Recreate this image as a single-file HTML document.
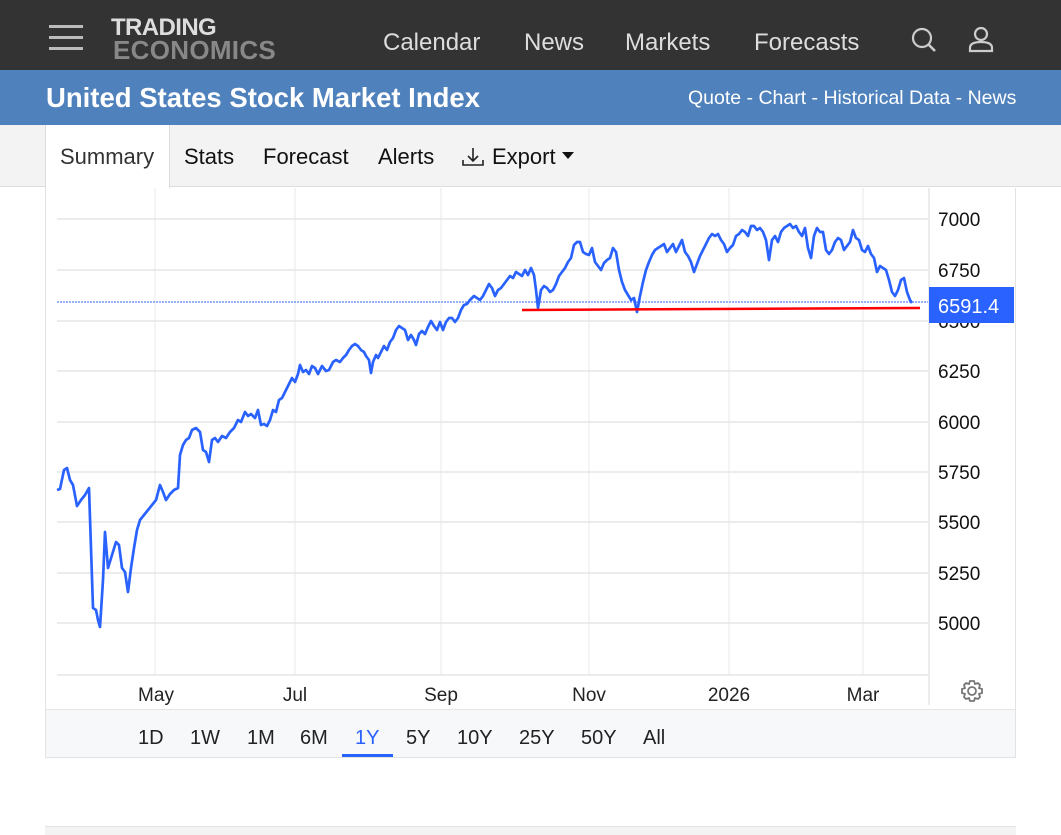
<!DOCTYPE html>
<html><head><meta charset="utf-8"><style>
*{margin:0;padding:0;box-sizing:border-box}
body{width:1061px;height:835px;overflow:hidden;background:#fff;font-family:"Liberation Sans",Arial,sans-serif;position:relative}
.a{position:absolute;white-space:nowrap}
</style></head><body>
<div class="a" style="left:0;top:0;width:1061px;height:70px;background:#333"></div>
<div class="a" style="left:49px;top:25px;width:34px;height:3px;background:#bbb"></div>
<div class="a" style="left:49px;top:36px;width:34px;height:3px;background:#bbb"></div>
<div class="a" style="left:49px;top:47px;width:34px;height:3px;background:#bbb"></div>
<div class="a" style="left:111px;top:17px;font-weight:bold;font-size:24px;line-height:22px;color:#ddd;letter-spacing:-0.6px">TRADING</div>
<div class="a" style="left:113px;top:38px;font-weight:bold;font-size:26px;line-height:24px;color:#888;letter-spacing:0.3px">ECONOMICS</div>
<div class="a" style="left:383px;top:29px;font-size:24px;color:#ddd">Calendar</div>
<div class="a" style="left:524px;top:29px;font-size:24px;color:#ddd">News</div>
<div class="a" style="left:625px;top:29px;font-size:24px;color:#ddd">Markets</div>
<div class="a" style="left:754px;top:29px;font-size:24px;color:#ddd">Forecasts</div>
<svg class="a" style="left:910px;top:26px" width="30" height="28"><circle cx="12" cy="12" r="9" fill="none" stroke="#ccc" stroke-width="2.2"/><path d="M18 18L25 25" stroke="#ccc" stroke-width="2.6"/></svg>
<svg class="a" style="left:966px;top:26px" width="30" height="28"><circle cx="15" cy="8" r="6" fill="none" stroke="#ccc" stroke-width="2.2"/><path d="M4 25V22Q4 16 15 16Q26 16 26 22V25Z" fill="none" stroke="#ccc" stroke-width="2.2"/></svg>
<div class="a" style="left:0;top:70px;width:1061px;height:55px;background:#4f81bd"></div>
<div class="a" style="left:46px;top:82px;font-weight:bold;font-size:27.5px;color:#fff">United States Stock Market Index</div>
<div class="a" style="left:688px;top:87px;font-size:19.5px;color:#fff">Quote - Chart - Historical Data - News</div>
<div class="a" style="left:0;top:125px;width:1061px;height:62px;background:#f3f3f3;border-bottom:1px solid #ddd"></div>
<div class="a" style="left:45px;top:125px;width:125px;height:63px;background:#fff;border-left:1px solid #ddd;border-right:1px solid #ddd"></div>
<div class="a" style="left:60px;top:144px;font-size:22px;color:#333">Summary</div>
<div class="a" style="left:184px;top:144px;font-size:22px;color:#111">Stats</div>
<div class="a" style="left:263px;top:144px;font-size:22px;color:#111">Forecast</div>
<div class="a" style="left:378px;top:144px;font-size:22px;color:#111">Alerts</div>
<svg class="a" style="left:461px;top:146px" width="24" height="22"><path d="M12 2V15M7 10L12 15L17 10M2 14V19H22V14" fill="none" stroke="#222" stroke-width="1.6"/></svg>
<div class="a" style="left:492px;top:144px;font-size:22px;color:#111">Export</div>
<svg class="a" style="left:562px;top:152px" width="12" height="8"><path d="M0 0H12L6 7Z" fill="#111"/></svg>
<div class="a" style="left:45px;top:188px;width:971px;height:570px;border:1px solid #e3e3e3;border-top:none"></div>
<svg class="a" style="left:0;top:0" width="1061" height="835">
<g stroke="#eef0f3" stroke-width="1.5">
<line x1="155" y1="188" x2="155" y2="675"/><line x1="295" y1="188" x2="295" y2="675"/><line x1="441" y1="188" x2="441" y2="675"/><line x1="589" y1="188" x2="589" y2="675"/><line x1="729" y1="188" x2="729" y2="675"/><line x1="863" y1="188" x2="863" y2="675"/>
</g>
<g stroke="#e6e6e6" stroke-width="1.5">
<line x1="57" y1="219" x2="928" y2="219"/><line x1="57" y1="270" x2="928" y2="270"/><line x1="57" y1="321" x2="928" y2="321"/><line x1="57" y1="371" x2="928" y2="371"/><line x1="57" y1="422" x2="928" y2="422"/><line x1="57" y1="472" x2="928" y2="472"/><line x1="57" y1="522" x2="928" y2="522"/><line x1="57" y1="573" x2="928" y2="573"/><line x1="57" y1="623" x2="928" y2="623"/>
<line x1="57" y1="675" x2="928" y2="675"/>
<line x1="929" y1="188" x2="929" y2="705"/>
</g>
<line x1="57" y1="302" x2="928" y2="302" stroke="#3366ff" stroke-width="1" stroke-dasharray="2,1"/>
<polyline fill="none" stroke="#2962ff" stroke-width="2.7" stroke-linejoin="round" points="57,490 60,489 64,470 67,468 70,480 73,485 77,506 81,500 85,495 89,488 93,608 96,610 98,620 100,627 103,580 105,532 108,568 112,555 116,542 119,545 122,568 125,572 128,592 131,568 134,548 137,530 140,520 144,515 148,510 152,505 156,500 160,485 163,492 166,500 170,494 174,490 178,488 180,455 183,445 186,440 189,438 192,430 196,428 200,432 203,450 206,452 209,462 212,440 215,438 218,442 222,436 226,438 230,432 234,428 238,420 241,422 245,412 248,416 251,414 255,418 258,410 261,425 264,424 267,426 270,420 273,410 276,412 279,400 282,398 285,392 289,384 292,378 295,382 298,374 300,365 303,372 306,370 309,374 312,366 315,368 318,374 322,366 326,371 329,370 333,362 336,360 340,362 343,358 346,355 349,350 352,346 355,344 358,346 361,350 364,352 366,356 369,360 371,373 373,362 376,355 378,358 381,352 384,346 387,350 390,342 393,338 396,330 399,326 402,328 405,330 408,340 411,335 414,340 416,345 419,334 422,331 425,334 428,327 431,321 434,326 437,330 440,322 443,330 446,322 449,318 452,318 455,322 458,318 461,310 464,305 467,304 470,300 474,296 477,298 480,300 483,296 486,290 489,284 492,288 495,296 498,290 501,288 504,284 507,280 510,276 513,278 516,272 519,274 522,276 525,270 528,275 531,268 534,275 536,290 538,308 541,290 544,286 547,288 550,292 553,290 556,284 559,276 562,272 565,268 568,262 571,258 574,245 577,242 580,242 583,252 586,254 589,255 592,248 595,262 598,266 601,270 604,263 607,260 610,258 613,248 616,252 619,270 622,282 625,290 628,295 631,300 634,298 637,312 640,296 643,282 646,270 649,262 652,255 655,250 658,248 661,246 664,244 667,252 670,248 673,244 676,252 679,246 682,240 685,252 688,256 691,262 694,272 697,264 700,256 703,250 706,244 709,238 712,234 715,236 718,234 721,240 724,244 727,252 730,248 733,245 736,236 739,234 742,230 745,232 748,236 751,226 754,226 757,230 760,228 763,232 766,240 769,260 772,240 775,236 778,242 781,232 784,228 787,226 790,224 793,228 796,226 799,232 802,236 805,228 808,248 811,258 814,236 817,228 820,232 823,232 826,250 829,254 832,250 835,242 838,238 841,240 844,250 847,246 850,242 853,230 856,238 859,240 862,250 865,252 868,246 871,254 874,258 877,272 880,266 883,268 886,270 889,280 892,292 895,296 898,290 901,280 904,278 907,292 910,300 912,303"/>
<line x1="522" y1="310" x2="920" y2="308" stroke="#ff0000" stroke-width="2.5"/>
<g font-family="Liberation Sans,Arial,sans-serif" font-size="19" fill="#111">
<text x="938" y="226">7000</text><text x="938" y="277">6750</text><text x="938" y="328">6500</text><text x="938" y="378">6250</text><text x="938" y="429">6000</text><text x="938" y="479">5750</text><text x="938" y="529">5500</text><text x="938" y="580">5250</text><text x="938" y="630">5000</text>
</g>
<rect x="929" y="287" width="85" height="36" fill="#2962ff"/>
<text x="938" y="313" font-family="Liberation Sans,Arial,sans-serif" font-size="20" fill="#fff">6591.4</text>
<g font-family="Liberation Sans,Arial,sans-serif" font-size="19" fill="#222" text-anchor="middle">
<text x="156" y="701">May</text><text x="295" y="701">Jul</text><text x="441" y="701">Sep</text><text x="589" y="701">Nov</text><text x="729" y="701">2026</text><text x="863" y="701">Mar</text>
</g>
<g transform="translate(972,691)" fill="none" stroke="#777" stroke-width="1.8"><circle r="4"/><path d="M-2-10H2L3-7L6-8L8-6L7-3L10-2V2L7 3L8 6L6 8L3 7L2 10H-2L-3 7L-6 8L-8 6L-7 3L-10 2V-2L-7-3L-8-6L-6-8L-3-7Z"/></g>
</svg>
<div class="a" style="left:46px;top:709px;width:969px;height:48px;background:#f7f8fa;border-top:1px solid #e5e5e5"></div>
<div class="a" style="left:0;top:727px;width:1061px;font-size:20px;color:#222">
<span class="a" style="left:138px">1D</span><span class="a" style="left:190px">1W</span><span class="a" style="left:247px">1M</span><span class="a" style="left:300px">6M</span><span class="a" style="left:355px;color:#2962ff">1Y</span><span class="a" style="left:406px">5Y</span><span class="a" style="left:457px">10Y</span><span class="a" style="left:519px">25Y</span><span class="a" style="left:581px">50Y</span><span class="a" style="left:643px">All</span>
</div>
<div class="a" style="left:342px;top:754px;width:51px;height:3px;background:#2962ff"></div>
<div class="a" style="left:45px;top:826px;width:971px;height:9px;background:#f3f3f3;border-top:1px solid #e3e3e3"></div>
</body></html>
